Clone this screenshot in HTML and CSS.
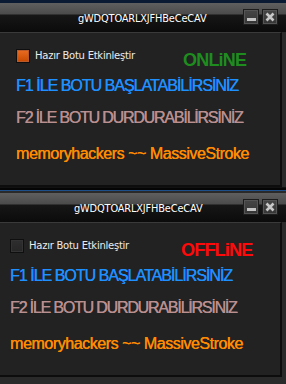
FILE: index.html
```html
<!DOCTYPE html>
<html lang="tr">
<head>
<meta charset="utf-8">
<title>Bot</title>
<link rel="stylesheet" href="styles.css">
</head>
<body>
<div class="screen">
  <div class="win win-a">
    <div class="titlebar">
      <span class="title">gWDQTOARLXJFHBeCeCAV</span>
      <div class="btns">
        <span class="btn"><span class="min-bar"></span></span>
        <span class="btn"><svg class="x" viewBox="0 0 10 10" width="10" height="10"><path d="M1.5 1.5L8.5 8.5M8.5 1.5L1.5 8.5"/></svg></span>
      </div>
    </div>
    <div class="panel">
      <div class="row">
        <span class="cb on"></span>
        <span class="lbl">Hazır Botu Etkinleştir</span>
        <span class="status online">ONLiNE</span>
      </div>
      <p class="line f1">F1 İLE BOTU BAŞLATABİLİRSİNİZ</p>
      <p class="line f2">F2 İLE BOTU DURDURABİLİRSİNİZ</p>
      <p class="line mh">memoryhackers ~~ MassiveStroke</p>
    </div>
  </div>
  <div class="win win-b">
    <div class="titlebar">
      <span class="title">gWDQTOARLXJFHBeCeCAV</span>
      <div class="btns">
        <span class="btn"><span class="min-bar"></span></span>
        <span class="btn"><svg class="x" viewBox="0 0 10 10" width="10" height="10"><path d="M1.5 1.5L8.5 8.5M8.5 1.5L1.5 8.5"/></svg></span>
      </div>
    </div>
    <div class="panel">
      <div class="row">
        <span class="cb"></span>
        <span class="lbl">Hazır Botu Etkinleştir</span>
        <span class="status offline">OFFLiNE</span>
      </div>
      <p class="line f1">F1 İLE BOTU BAŞLATABİLİRSİNİZ</p>
      <p class="line f2">F2 İLE BOTU DURDURABİLİRSİNİZ</p>
      <p class="line mh">memoryhackers ~~ MassiveStroke</p>
    </div>
  </div>
</div>
</body>
</html>
```
FILE: styles.css
```css
html, body {
  margin: 0;
  padding: 0;
}
body {
  width: 286px;
  height: 384px;
  overflow: hidden;
  background: #0b1a33;
  font-family: "DejaVu Sans", sans-serif;
}
.screen {
  display: flex;
  flex-direction: column;
}
.win {
  background: #2a2a2a;
}
.win-a {
  margin-top: 3px;
  border-bottom: 1px solid #111;
}
.win-b {
  border-top: 2px solid #050505;
  box-shadow: inset 0 1px 0 #1d4f8a;
  padding-top: 3px;
}
.titlebar {
  height: 29px;
  display: flex;
  align-items: flex-start;
  background: linear-gradient(#5f5f5f 0, #4b4b4b 11px, #161616 12px, #0b0b0b 29px);
}
.title {
  color: #ffffff;
  font-size: 9.8px;
  line-height: 12px;
  margin-top: 10px;
  margin-left: 78px;
  letter-spacing: -0.15px;
  white-space: nowrap;
}
.win-b .title {
  margin-left: 74px;
}
.btns {
  margin-left: auto;
  margin-right: 8px;
  margin-top: 6px;
  display: flex;
  gap: 3px;
}
.btn {
  width: 16px;
  height: 16px;
  box-sizing: border-box;
  background: linear-gradient(#464646, #353535);
  border: 1px solid #1c1c1c;
  box-shadow: inset 0 0 0 1px #555;
  display: flex;
  align-items: center;
  justify-content: center;
}
.min-bar {
  width: 9px;
  height: 3px;
  background: #c4c4c4;
  margin-top: 5px;
}
.x path {
  stroke: #c8c8c8;
  stroke-width: 2.6;
  fill: none;
}
.panel {
  background: #222222;
  border-top: 1px solid #3a3a3a;
  border-right: 2px solid #0d0d0d;
  border-bottom: 2px solid #0d0d0d;
  margin-right: 4px;
  height: 136px;
  padding: 16px 0 0 16px;
}
.win-b .panel {
  padding-left: 10px;
  margin-bottom: 7px;
}
.row {
  display: flex;
  align-items: flex-start;
  height: 20px;
}
.cb {
  width: 14px;
  height: 14px;
  box-sizing: border-box;
  border: 1px solid #0f0f0f;
  background: linear-gradient(#2e2e2e, #262626);
  box-shadow: inset 0 0 0 1px #333;
}
.cb.on {
  background: linear-gradient(#ea6c22, #c84800);
  box-shadow: inset 0 0 0 1px #b85a2a;
}
.lbl {
  margin-left: 5px;
  width: 148px;
  font-size: 10px;
  line-height: 14px;
  letter-spacing: -0.25px;
  color: #ececec;
  white-space: nowrap;
}
.win-b .lbl {
  width: 152px;
}
.status {
  font-family: "Liberation Sans", sans-serif;
  font-weight: bold;
  font-size: 18px;
  line-height: 20px;
  letter-spacing: -0.8px;
  margin-top: 1px;
}
.online {
  color: #1e8c1e;
}
.offline {
  color: #ff0a0a;
}
.line {
  margin: 0;
  font-family: "Liberation Sans", sans-serif;
  font-size: 16px;
  line-height: 20px;
  white-space: nowrap;
  text-shadow: 0.35px 0 0 currentColor;
}
.f1 {
  margin-top: 7px;
  color: #1e90ff;
  letter-spacing: -1px;
}
.f2 {
  margin-top: 12px;
  color: #b98f8f;
  letter-spacing: -1.2px;
}
.mh {
  margin-top: 16px;
  color: #ff8c00;
  letter-spacing: -0.45px;
}
```
